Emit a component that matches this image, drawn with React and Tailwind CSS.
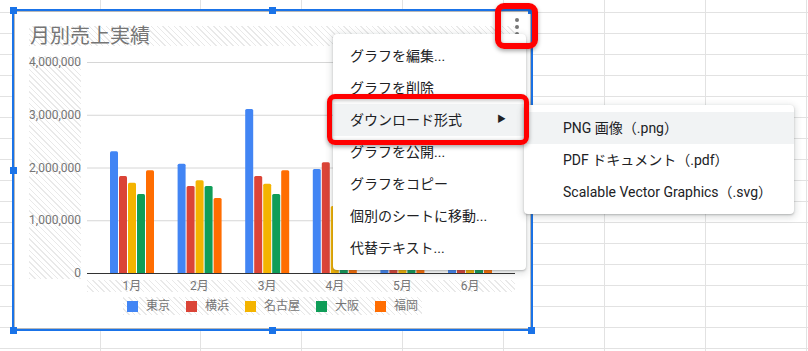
import React from 'react';

const hatch =
  'bg-[repeating-linear-gradient(45deg,#e9e9e9_0px,#e9e9e9_1px,transparent_1px,transparent_4px)]';

const series = [
  { name: '東京', color: '#4285f4' },
  { name: '横浜', color: '#db4437' },
  { name: '名古屋', color: '#f4b400' },
  { name: '大阪', color: '#0f9d58' },
  { name: '福岡', color: '#ff6d01' },
];

const months = ['1月', '2月', '3月', '4月', '5月', '6月'];

// 単位: 百万
const data = [
  [2.31, 1.84, 1.71, 1.5, 1.95],
  [2.07, 1.65, 1.76, 1.65, 1.42],
  [3.11, 1.84, 1.69, 1.5, 1.95],
  [1.97, 2.1, 1.27, 1.6, 1.8],
  [2.2, 1.9, 1.7, 1.5, 2.0],
  [2.4, 2.0, 1.8, 1.6, 2.1],
];

const yLabels = ['4,000,000', '3,000,000', '2,000,000', '1,000,000', '0'];

const menuItems = [
  'グラフを編集...',
  'グラフを削除',
  'ダウンロード形式',
  'グラフを公開...',
  'グラフをコピー',
  '個別のシートに移動...',
  '代替テキスト...',
];

const subItems = ['PNG 画像（.png）', 'PDF ドキュメント（.pdf）', 'Scalable Vector Graphics（.svg）'];

const font = "font-['Roboto','Noto_Sans_CJK_JP',sans-serif]";

const BASE = 217;
const PX = 52.75;

const barPath = (x, top, w) => {
  const r = 1.5;
  return `M${x} ${BASE} V${top + r} Q${x} ${top} ${x + r} ${top} H${x + w - r} Q${x + w} ${top} ${x + w} ${top + r} V${BASE} Z`;
};

const Plot = () => (
  <svg width="428" height="223" className="block ml-[6px]">
    {[0, 1, 2, 3].map((i) => (
      <line key={i} x1="0" x2="428" y1={6.5 + i * PX} y2={6.5 + i * PX} stroke="#d6d6d6" strokeWidth="1" />
    ))}
    {data.map((vals, i) => {
      const cx = 45 + i * 67.6;
      return vals.map((v, k) => {
        const x = cx - 22 + k * 9;
        return <path key={`${i}-${k}`} d={barPath(x, BASE - v * PX, 8)} fill={series[k].color} />;
      });
    })}
    <line x1="0" x2="428" y1={BASE + 0.5} y2={BASE + 0.5} stroke="#333" strokeWidth="1" />
  </svg>
);

const Handle = () => <div className="w-[7px] h-[7px] bg-[#1a73e8]" />;

const menuShadow = 'shadow-[0_2px_6px_2px_rgba(60,64,67,0.15),0_1px_2px_rgba(60,64,67,0.3)]';
const redShadow = 'shadow-[0_2px_4px_rgba(0,0,0,0.35),inset_0_1px_4px_rgba(0,0,0,0.3)]';

export default function App() {
  return (
    <div className={`relative w-[808px] h-[351px] overflow-hidden bg-white ${font}`}>
      {/* シート */}
      <div className="grid grid-cols-[101px_100px_101px_101px_101px_101px_101px_101px_101px] grid-rows-[13px_repeat(17,21px)]">
        {Array.from({ length: 18 * 9 }).map((_, i) => (
          <div key={i} className="border-r border-b border-[#e2e2e2]" />
        ))}
      </div>

      {/* グラフ */}
      <div className="absolute left-[12px] top-[9px] w-[521px] h-[322px] bg-white border-2 border-[#1a73e8] shadow-[inset_0_0_0_1px_#b8b8b8]">
        <div className={`mt-[15px] ml-[15px] w-[486px] h-[20px] ${hatch}`}>
          <span className="pl-[1px] text-[20px] leading-[20px] text-[#757575]">月別売上実績</span>
        </div>

        <div className="mt-[10px] ml-[15px] flex">
          <div className={`w-[52px] h-[223px] flex flex-col justify-between items-end ${hatch}`}>
            {yLabels.map((l) => (
              <span key={l} className="h-[12px] text-[12px] leading-[12px] text-[#757575]">
                {l}
              </span>
            ))}
          </div>
          <Plot />
        </div>

        <div className={`mt-[1px] ml-[73px] w-[428px] h-[12px] px-[11px] grid grid-cols-6 ${hatch}`}>
          {months.map((m) => (
            <span key={m} className="text-center text-[12px] leading-[12px] text-[#757575]">
              {m}
            </span>
          ))}
        </div>

        <div className="mt-[5px] flex justify-center">
          <div className={`h-[18px] px-[4px] flex items-center gap-[16px] ${hatch}`}>
            {series.map((s) => (
              <div key={s.name} className="flex items-center gap-[8px]">
                <div className="w-[11px] h-[11px]" style={{ backgroundColor: s.color }} />
                <span className="text-[12px] leading-[12px] text-[#757575]">{s.name}</span>
              </div>
            ))}
          </div>
        </div>

        {/* ケバブ */}
        <div className="absolute left-[501px] top-[7px] flex flex-col gap-[3px]">
          <div className="w-[4px] h-[4px] rounded-full bg-[#757575]" />
          <div className="w-[4px] h-[4px] rounded-full bg-[#757575]" />
          <div className="w-[4px] h-[4px] rounded-full bg-[#757575]" />
        </div>
      </div>

      {/* 選択ハンドル */}
      <div className="absolute left-[10px] top-[7px] w-[525px] h-[327px] flex flex-col justify-between">
        <div className="flex justify-between">
          <Handle />
          <Handle />
          <Handle />
        </div>
        <div className="flex justify-between">
          <Handle />
          <Handle />
        </div>
        <div className="flex justify-between">
          <Handle />
          <Handle />
          <Handle />
        </div>
      </div>

      {/* メニュー */}
      <div className={`absolute left-[333px] top-[34px] w-[193px] py-[6px] bg-white rounded-[4px] ${menuShadow}`}>
        {menuItems.map((t, i) => (
          <div
            key={t}
            className={`h-[32px] pl-[17px] pr-[20px] flex items-center justify-between text-[14px] text-[#202124] ${
              i === 2 ? 'bg-[#f1f3f4]' : ''
            }`}
          >
            <span>{t}</span>
            {i === 2 && <span className="text-[9px] text-[#202124]">▶</span>}
          </div>
        ))}
      </div>

      <div className={`absolute left-[524px] top-[105px] w-[270px] pt-[7px] pb-[6px] bg-white rounded-[4px] ${menuShadow}`}>
        {subItems.map((t, i) => (
          <div
            key={t}
            className={`h-[32px] pl-[39px] flex items-center text-[14px] text-[#202124] ${
              i === 0 ? 'bg-[#f1f3f4]' : ''
            }`}
          >
            {t}
          </div>
        ))}
      </div>

      {/* 赤枠 */}
      <div className={`absolute left-[495px] top-[3px] w-[43px] h-[46px] border-[6px] border-[#ff0000] rounded-[9px] ${redShadow}`} />
      <div className={`absolute left-[327px] top-[94px] w-[202px] h-[51px] border-[5px] border-[#ff0000] rounded-[8px] ${redShadow}`} />
    </div>
  );
}
